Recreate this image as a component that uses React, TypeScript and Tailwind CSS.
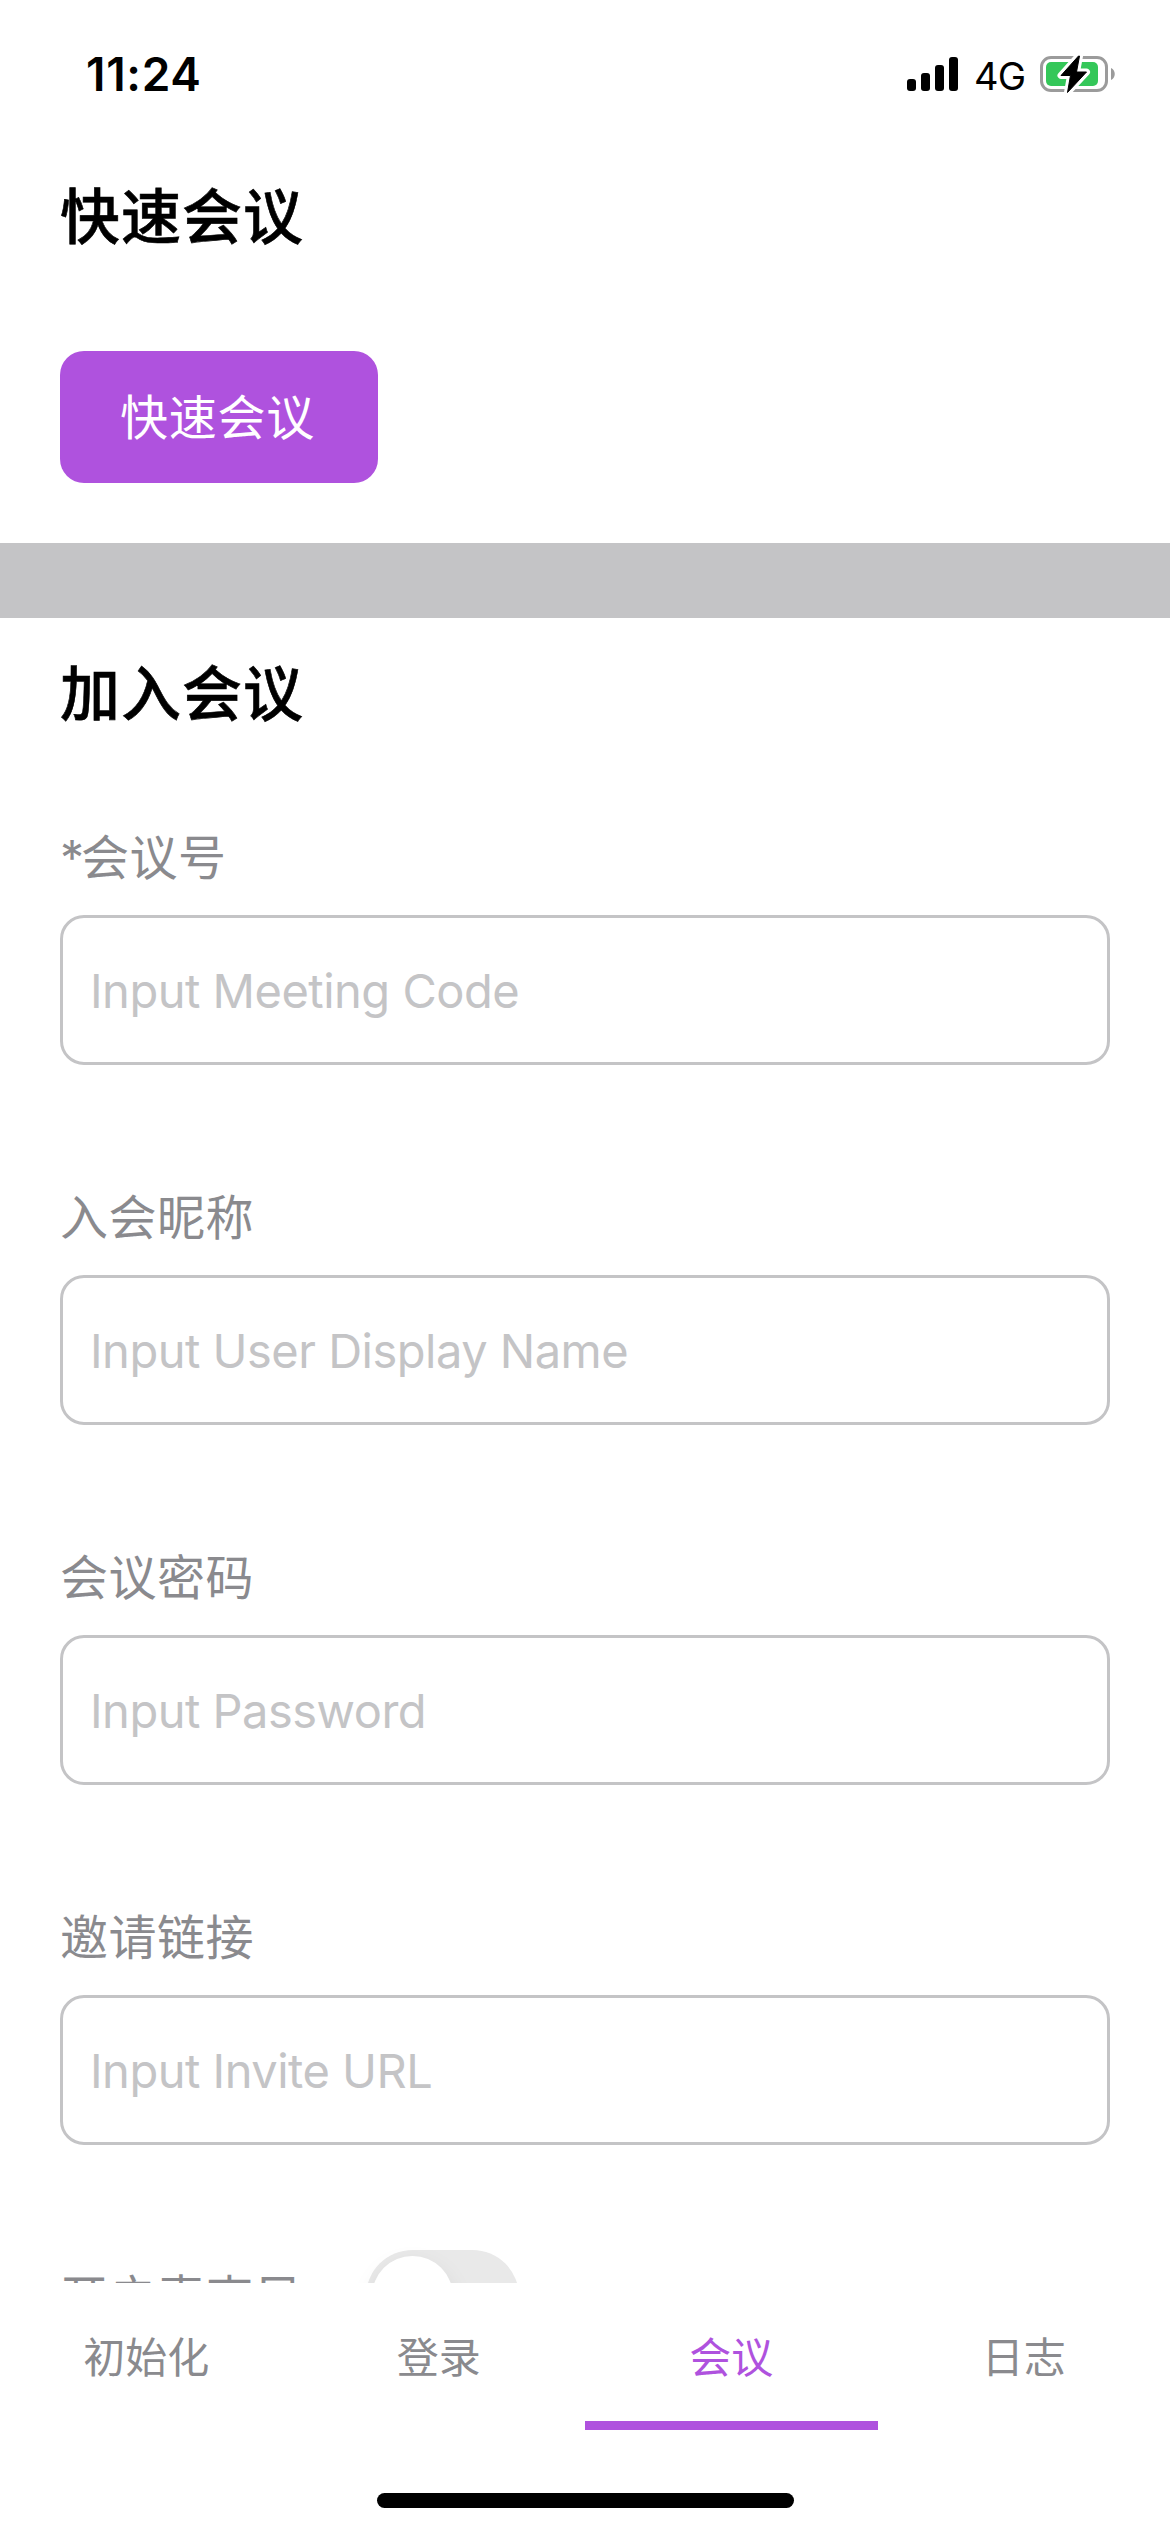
const fields = [
  { mark: "*", label: "会议号", placeholder: "Input Meeting Code" },
  { mark: "", label: "入会昵称", placeholder: "Input User Display Name" },
  { mark: "", label: "会议密码", placeholder: "Input Password" },
  { mark: "", label: "邀请链接", placeholder: "Input Invite URL" },
];

const tabs = ["初始化", "登录", "会议", "日志"];

function SignalIcon() {
  return (
    <svg className="h-[34px] w-[51px]" viewBox="0 0 51 34">
      <rect x="0" y="22" width="9" height="12" rx="3" />
      <rect x="14" y="16" width="9" height="18" rx="3" />
      <rect x="28" y="8" width="9" height="26" rx="3" />
      <rect x="42" y="0" width="9" height="34" rx="3" />
    </svg>
  );
}

function BatteryIcon() {
  const bolt = "M38.5 1 21 20.5h9.5L27.5 37.5 46.5 17H36.5L39.5 1Z";
  return (
    <svg className="h-[38px] w-[76px]" viewBox="0 0 76 38">
      <rect x="1.5" y="2.5" width="65" height="33" rx="9.5" fill="none" stroke="#9b9b9b" strokeWidth="3" />
      <rect x="6" y="7" width="52" height="24" rx="5" fill="#34c759" />
      <path d="M71 13c5 2 5 10 0 12Z" fill="#9b9b9b" />
      <path d={bolt} fill="#fff" stroke="#fff" strokeWidth="7" strokeLinejoin="round" />
      <path d={bolt} fill="#000" stroke="#000" strokeWidth="1" strokeLinejoin="round" />
    </svg>
  );
}

function StatusBar() {
  return (
    <header className="flex h-[141px] items-start justify-between pr-[54px] pl-[86px]">
      <div className="mt-[46px] text-[46px] leading-[56px] font-semibold tracking-[0.7px]">11:24</div>
      <div className="mt-[55px] flex h-[38px] items-center">
        <SignalIcon />
        <span className="ml-[16px] w-[66px] pt-[3px] text-[38px] leading-[38px] tracking-[-0.8px]">4G</span>
        <BatteryIcon />
      </div>
    </header>
  );
}

function Heading({ text }: { text: string }) {
  return (
    <h1 className="h-[90px] pt-[1px] text-[60px] leading-[90px] font-medium tracking-[1px] [-webkit-text-stroke:0.6px_black]">
      {text}
    </h1>
  );
}

export default function App() {
  return (
    <div className="flex h-[2532px] w-[1170px] flex-col overflow-hidden bg-white font-['Inter','Noto_Sans_CJK_SC',sans-serif] text-black">
      <StatusBar />
      <main className="h-[2142px] overflow-hidden">
        <section className="flex h-[402px] flex-col items-start px-[60px] pt-[30px]">
          <Heading text="快速会议" />
          <button className="mt-[90px] h-[132px] w-[318px] rounded-[24px] bg-[#af52de] pt-[2px] pr-[3px] text-[48px] leading-[72px] tracking-[0.7px] text-white">
            快速会议
          </button>
        </section>
        <div className="h-[75px] bg-[#c4c4c6]" />
        <section className="px-[60px] pt-[30px]">
          <Heading text="加入会议" />
          <div className="mt-[82px] flex flex-col gap-[115px]">
            {fields.map((f) => (
              <label key={f.label} className="flex h-[245px] flex-col">
                <span className="h-[95px] pt-[2px] text-[48px] leading-[72px] tracking-[0.5px] text-[#8a8a8e]">
                  {f.mark && <span className="tracking-[-3px]">{f.mark}</span>}
                  {f.label}
                </span>
                <input
                  className="h-[150px] w-full rounded-[24px] border-[3px] border-[#c4c4c6] px-[27px] text-[47px] tracking-[-0.5px] placeholder:text-[#c4c4c6]"
                  placeholder={f.placeholder}
                />
              </label>
            ))}
          </div>
          <div className="mt-[105px] flex h-[93px] items-center">
            <span className="w-[306px] pt-[2px] text-[48px] leading-[72px] tracking-[0.5px] text-[#8a8a8e]">开启麦克风</span>
            <span className="flex h-[93px] w-[153px] items-center rounded-full bg-[#e9e9e9] p-[6px]">
              <span className="size-[81px] rounded-full bg-white shadow-[0_9px_24px_rgba(0,0,0,0.08)]" />
            </span>
          </div>
        </section>
      </main>
      <nav className="grid h-[147px] grid-cols-4 text-center text-[42px] leading-[63px] text-[#8a8a8e]">
        {tabs.map((t) => (
          <div
            key={t}
            className={
              t === "会议"
                ? "border-b-[9px] border-[#af52de] pt-[43px] text-[#af52de]"
                : "border-b-[9px] border-transparent pt-[43px]"
            }
          >
            {t}
          </div>
        ))}
      </nav>
      <div className="mt-[63px] h-[15px] w-[417px] self-center rounded-full bg-black" />
    </div>
  );
}
